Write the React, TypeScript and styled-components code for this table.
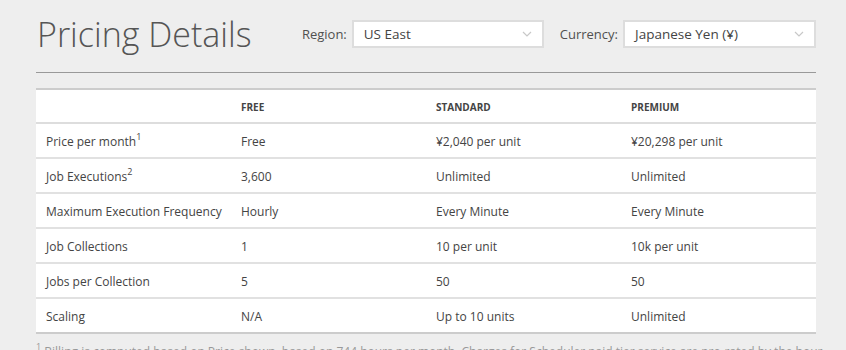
import React from 'react';
import styled, { createGlobalStyle } from 'styled-components';

const GlobalStyle = createGlobalStyle`
  html, body {
    margin: 0;
    padding: 0;
    background: #eeeeee;
    overflow: hidden;
  }
  body {
    font-family: 'Open Sans', 'Noto Sans', Arial, sans-serif;
    color: #444;
  }
`;

const Page = styled.div`
  width: 780px;
  margin-left: 36px;
  padding-top: 10px;
`;

const TopBar = styled.div`
  display: flex;
  align-items: center;
  justify-content: space-between;
  height: 48px;
  padding-bottom: 14px;
  border-bottom: 1px solid #999;
`;

const Title = styled.h1`
  margin: 0 0 0 1px;
  font-size: 34px;
  font-weight: 300;
  color: #555;
  white-space: nowrap;
  flex: none;
  line-height: 48px;
`;

const Filters = styled.div`
  display: flex;
  align-items: center;
  gap: 16px;
`;

const Filter = styled.div`
  display: flex;
  align-items: center;
`;

const FilterLabel = styled.span`
  font-size: 13px;
  color: #505050;
  margin-right: 5px;
  white-space: nowrap;
`;

const Select = styled.div<{ w: number }>`
  width: ${p => p.w}px;
  height: 28px;
  box-sizing: border-box;
  border: 2px solid #dddddd;
  background: #fff;
  display: flex;
  align-items: center;
  justify-content: space-between;
  padding: 0 10px 0 10px;
  font-size: 13.5px;
  color: #444;
  white-space: nowrap;
`;

const Table = styled.table`
  width: 780px;
  margin-top: 15px;
  border-collapse: collapse;
  background: #fff;
  border-top: 2px solid #cccccc;
  border-bottom: 2px solid #cccccc;
  table-layout: fixed;
  font-size: 12px;
`;

const HeadCell = styled.th`
  height: 31px;
  text-align: left;
  padding: 1px 10px 0;
  font-size: 10px;
  font-weight: 700;
  color: #444;
  text-transform: uppercase;
  border-bottom: 2px solid #dddddd;
`;

const Row = styled.tr<{ last?: boolean }>`
  border-bottom: ${p => (p.last ? 'none' : '2px solid #e1e1e1')};
`;

const Cell = styled.td`
  height: 32px;
  padding: 1px 10px 0;
  color: #444;
  white-space: nowrap;
`;

const Sup = styled.sup`
  font-size: 9px;
  vertical-align: 6px;
  line-height: 0;
`;

const Footnote = styled.p`
  margin: 9px 0 0 0;
  font-size: 12px;
  color: #999;
  white-space: nowrap;
`;

const Chevron = () => (
  <svg width="10" height="6" viewBox="0 0 10 6">
    <path d="M1 1 L5 5 L9 1" fill="none" stroke="#c8c8c8" strokeWidth="1.2" />
  </svg>
);

const rows: [React.ReactNode, string, string, string][] = [
  [<>Price per month<Sup>1</Sup></>, 'Free', '¥2,040 per unit', '¥20,298 per unit'],
  [<>Job Executions<Sup>2</Sup></>, '3,600', 'Unlimited', 'Unlimited'],
  ['Maximum Execution Frequency', 'Hourly', 'Every Minute', 'Every Minute'],
  ['Job Collections', '1', '10 per unit', '10k per unit'],
  ['Jobs per Collection', '5', '50', '50'],
  ['Scaling', 'N/A', 'Up to 10 units', 'Unlimited'],
];

export default function App() {
  return (
    <>
      <GlobalStyle />
      <Page>
        <TopBar>
          <Title>Pricing Details</Title>
          <Filters>
            <Filter>
              <FilterLabel>Region:</FilterLabel>
              <Select w={192}>
                <span>US East</span>
                <Chevron />
              </Select>
            </Filter>
            <Filter>
              <FilterLabel>Currency:</FilterLabel>
              <Select w={193}>
                <span>Japanese Yen (¥)</span>
                <Chevron />
              </Select>
            </Filter>
          </Filters>
        </TopBar>
        <Table>
          <thead>
            <tr>
              <HeadCell></HeadCell>
              <HeadCell>Free</HeadCell>
              <HeadCell>Standard</HeadCell>
              <HeadCell>Premium</HeadCell>
            </tr>
          </thead>
          <tbody>
            {rows.map((r, i) => (
              <Row key={i} last={i === rows.length - 1}>
                <Cell>{r[0]}</Cell>
                <Cell>{r[1]}</Cell>
                <Cell>{r[2]}</Cell>
                <Cell>{r[3]}</Cell>
              </Row>
            ))}
          </tbody>
        </Table>
        <Footnote>
          <Sup>1</Sup> Billing is computed based on Price shown, based on 744 hours per month. Charges for Scheduler paid tier service are pro-rated by the hour.
        </Footnote>
      </Page>
    </>
  );
}
